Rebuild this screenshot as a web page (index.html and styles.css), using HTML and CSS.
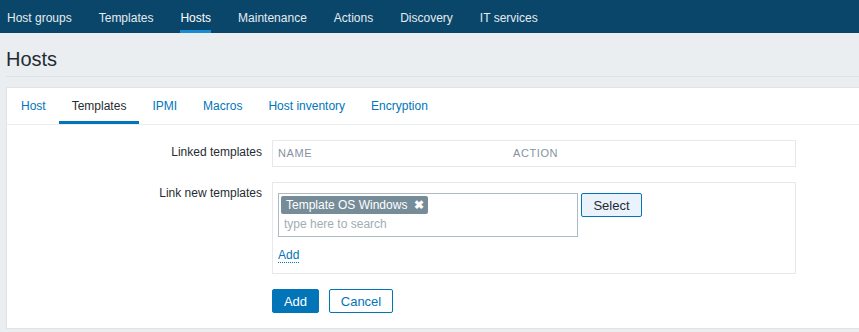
FILE: index.html
```html
<!DOCTYPE html>
<html lang="en">
<head>
  <meta charset="UTF-8">
  <meta name="viewport" content="width=device-width, initial-scale=1.0">
  <title>Hosts</title>
  <link rel="stylesheet" href="styles.css">
</head>
<body>
  <!-- Top menu -->
  <nav class="top-nav">
    <ul>
      <li><a href="#">Host groups</a></li>
      <li><a href="#">Templates</a></li>
      <li><a href="#" class="active">Hosts</a></li>
      <li><a href="#">Maintenance</a></li>
      <li><a href="#">Actions</a></li>
      <li><a href="#">Discovery</a></li>
      <li><a href="#">IT services</a></li>
    </ul>
  </nav>

  <header class="page-header">
    <h1>Hosts</h1>
  </header>

  <main class="panel">
    <ul class="tabs">
      <li><a href="#">Host</a></li>
      <li><a href="#" class="active">Templates</a></li>
      <li><a href="#">IPMI</a></li>
      <li><a href="#">Macros</a></li>
      <li><a href="#">Host inventory</a></li>
      <li><a href="#">Encryption</a></li>
    </ul>

    <form class="form-grid">
      <label class="form-label">Linked templates</label>
      <div class="field-box">
        <table class="linked-table">
          <thead>
            <tr>
              <th class="col-name">Name</th>
              <th>Action</th>
            </tr>
          </thead>
        </table>
      </div>

      <label class="form-label label-new">Link new templates</label>
      <div class="field-box new-box">
        <div class="ms-row">
          <div class="multiselect">
            <span class="chip">Template OS Windows <span class="chip-remove">&#10006;</span></span>
            <input class="ms-input" type="text" placeholder="type here to search">
          </div>
          <button type="button" class="btn-select">Select</button>
        </div>
        <a href="#" class="link-add">Add</a>
      </div>

      <div class="form-actions">
        <button type="submit" class="btn-primary">Add</button>
        <button type="button" class="btn-alt">Cancel</button>
      </div>
    </form>
  </main>
</body>
</html>
```

FILE: styles.css
```css
body {
  margin: 0;
  background-color: #ebeef0;
  font-family: "Liberation Sans", Arial, sans-serif;
  font-size: 12px;
  color: #1f2c33;
  overflow: hidden;
}
a {
  text-decoration: none;
}
/* Top menu */
.top-nav {
  background-color: #0a466a;
  height: 33px;
}
.top-nav ul {
  display: flex;
  gap: 27px;
  margin: 0;
  padding: 0 0 0 7px;
  list-style: none;
}
.top-nav a {
  display: block;
  padding-top: 6px;
  line-height: 24px;
  border-bottom: 3px solid transparent;
  color: #e5ecf0;
}
.top-nav a.active {
  color: #fff;
  border-bottom-color: #1b8bd3;
}
/* Page title */
.page-header {
  margin-left: 6px;
  padding: 14px 0 5px;
  border-bottom: 1px solid #dde1e4;
}
.page-header h1 {
  margin: 0;
  font-size: 20px;
  font-weight: normal;
  line-height: 24px;
}
/* Main panel */
.panel {
  display: block;
  margin: 10px 0 0 6px;
  background-color: #fff;
  border: 1px solid #dfe4e7;
  border-right: none;
}
.tabs {
  display: flex;
  margin: 0;
  padding: 0 0 0 1px;
  list-style: none;
  border-bottom: 1px solid #ebeef0;
}
.tabs a {
  display: block;
  padding: 4px 13px 0;
  line-height: 29px;
  border-bottom: 3px solid transparent;
  color: #0275b8;
}
.tabs a.active {
  color: #1f2c33;
  border-bottom-color: #0275b8;
}
/* Form */
.form-grid {
  display: grid;
  grid-template-columns: 255px 524px;
  column-gap: 10px;
  row-gap: 15px;
  padding: 15px 0;
}
.form-label {
  text-align: right;
  line-height: 14px;
  padding-top: 5px;
}
.label-new {
  padding-top: 4px;
}
.field-box {
  border: 1px solid #e6e9eb;
}
.linked-table {
  width: 100%;
  border-collapse: collapse;
}
.linked-table th {
  padding: 6px 5px;
  line-height: 13px;
  font-size: 11px;
  font-weight: normal;
  letter-spacing: 0.6px;
  text-transform: uppercase;
  text-align: left;
  color: #8593a0;
}
.linked-table .col-name {
  width: 225px;
}
.new-box {
  padding: 10px 5px;
}
.ms-row {
  display: flex;
  align-items: flex-start;
}
.multiselect {
  box-sizing: border-box;
  width: 300px;
  height: 44px;
  padding: 2px;
  border: 1px solid #acbbc2;
}
.chip {
  display: inline-block;
  height: 18px;
  padding: 0 4px 0 5px;
  line-height: 18px;
  border-radius: 2px;
  background-color: #768d99;
  color: #fff;
}
.chip-remove {
  margin-left: 3px;
  font-size: 12px;
  font-weight: bold;
}
.ms-input {
  display: block;
  width: 280px;
  margin: 1px 0 0;
  padding: 2px 3px;
  border: none;
  outline: none;
  font-family: inherit;
  font-size: 12px;
  color: #1f2c33;
}
.ms-input::placeholder {
  color: #a2adb4;
}
.btn-select {
  width: 61px;
  height: 24px;
  margin-left: 3px;
  padding: 0;
  border: 1px solid #0275b8;
  border-radius: 2px;
  background-color: #eaf3fb;
  font-family: inherit;
  font-size: 13px;
  color: #1f2c33;
}
.link-add {
  display: inline-block;
  margin-top: 10px;
  padding-top: 1px;
  line-height: 14px;
  color: #0275b8;
  border-bottom: 1px dotted #0275b8;
}
.form-actions {
  grid-column: 2;
  display: flex;
  gap: 10px;
}
.btn-primary,
.btn-alt {
  height: 24px;
  padding: 0;
  border: 1px solid #0275b8;
  border-radius: 2px;
  font-family: inherit;
  font-size: 13px;
}
.btn-primary {
  width: 47px;
  background-color: #0275b8;
  color: #fff;
}
.btn-alt {
  width: 64px;
  background-color: #fff;
  color: #0275b8;
}
```
